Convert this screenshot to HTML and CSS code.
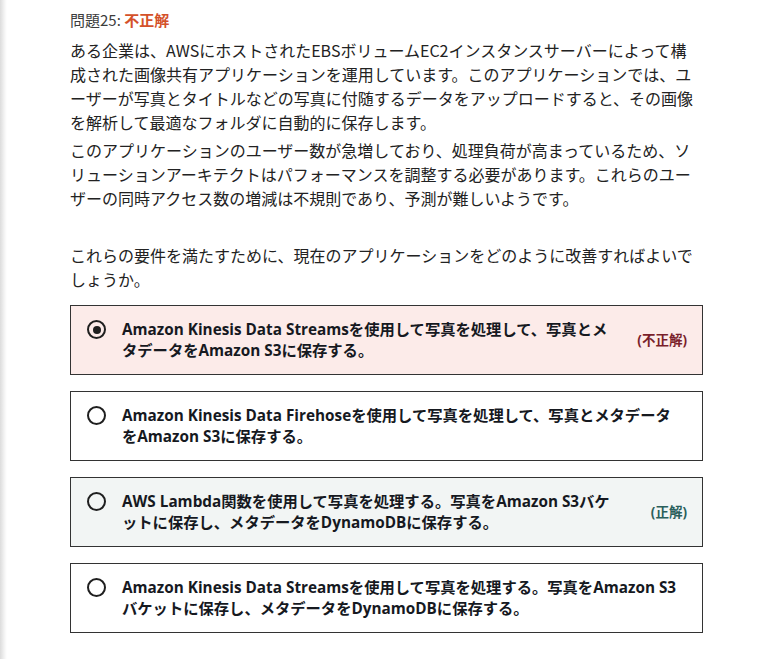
FILE: index.html
```html
<!DOCTYPE html>
<html lang="ja">
<head>
<meta charset="utf-8">
<title>問題25</title>
<link rel="stylesheet" href="styles.css">
</head>
<body>
<div class="page">
  <main class="question">
    <h2 class="q-title">問題25: <span class="q-result">不正解</span></h2>
    <p class="q-text">ある企業は、AWSにホストされたEBSボリュームEC2インスタンスサーバーによって構成された画像共有アプリケーションを運用しています。このアプリケーションでは、ユーザーが写真とタイトルなどの写真に付随するデータをアップロードすると、その画像を解析して最適なフォルダに自動的に保存します。</p>
    <p class="q-text">このアプリケーションのユーザー数が急増しており、処理負荷が高まっているため、ソリューションアーキテクトはパフォーマンスを調整する必要があります。これらのユーザーの同時アクセス数の増減は不規則であり、予測が難しいようです。</p>
    <p class="q-text q-ask">これらの要件を満たすために、現在のアプリケーションをどのように改善すればよいでしょうか。</p>

    <ul class="options">
      <li class="option option-wrong">
        <span class="radio radio-checked"></span>
        <span class="option-text">Amazon Kinesis Data Streamsを使用して写真を処理して、写真とメタデータをAmazon S3に保存する。</span>
        <span class="option-label label-wrong">(不正解)</span>
      </li>
      <li class="option">
        <span class="radio"></span>
        <span class="option-text">Amazon Kinesis Data Firehoseを使用して写真を処理して、写真とメタデータをAmazon S3に保存する。</span>
      </li>
      <li class="option option-correct">
        <span class="radio"></span>
        <span class="option-text">AWS Lambda関数を使用して写真を処理する。写真をAmazon S3バケットに保存し、メタデータをDynamoDBに保存する。</span>
        <span class="option-label label-correct">(正解)</span>
      </li>
      <li class="option">
        <span class="radio"></span>
        <span class="option-text">Amazon Kinesis Data Streamsを使用して写真を処理する。写真をAmazon S3バケットに保存し、メタデータをDynamoDBに保存する。</span>
      </li>
    </ul>
  </main>
</div>
</body>
</html>
```

FILE: styles.css
```css
html, body {
  margin: 0;
  padding: 0;
}

body {
  background: linear-gradient(90deg, #dcdcdc 0, #ececec 3px, #f7f7f7 5px, #ffffff 7px);
  font-family: "Noto Sans CJK JP", "Noto Sans", sans-serif;
  color: #222222;
  line-break: normal;
  min-height: 659px;
}

.page {
  padding: 8px 0 0 70px;
}

.question {
  width: 633px;
}

.q-title {
  margin: 0;
  font-size: 15px;
  font-weight: 400;
  line-height: 24px;
  color: #3c3c3c;
}

.q-result {
  font-weight: 700;
  color: #d4512a;
}

.q-text {
  max-width: 630px;
  margin: 6px 0 0;
  font-size: 16px;
  line-height: 24px;
}

.q-text + .q-text {
  margin-top: 4px;
}

.q-text.q-ask {
  margin-top: 33px;
}

.options {
  list-style: none;
  margin: 14px 0 0;
  padding: 0;
  display: flex;
  flex-direction: column;
  gap: 16px;
}

.option {
  display: flex;
  align-items: center;
  border: 1px solid #333333;
  padding: 13px 15px 13px 16px;
  background: #ffffff;
}

.option-wrong {
  background: #fcebe9;
}

.option-correct {
  background: #f2f5f4;
}

.radio {
  flex: none;
  align-self: flex-start;
  box-sizing: border-box;
  width: 19px;
  height: 19px;
  margin-top: 1px;
  border: 2px solid #1f1f1f;
  border-radius: 50%;
  display: flex;
  align-items: center;
  justify-content: center;
}

.radio-checked::after {
  content: "";
  width: 8px;
  height: 8px;
  border-radius: 50%;
  background: #1f1f1f;
}

.option-text {
  flex: 1;
  margin-left: 16px;
  padding-right: 7px;
  font-family: "Open Sans", "Noto Sans CJK JP", sans-serif;
  font-size: 15.3px;
  font-weight: 700;
  line-height: 21px;
  color: #16191f;
}

.option-label {
  flex: none;
  width: 50px;
  margin-left: 20px;
  text-align: right;
  font-family: "Open Sans", "Noto Sans CJK JP", sans-serif;
  font-size: 13.5px;
  font-weight: 700;
  line-height: 20px;
}

.label-wrong {
  color: #7a1f2b;
}

.label-correct {
  color: #2a5f5b;
}
```
